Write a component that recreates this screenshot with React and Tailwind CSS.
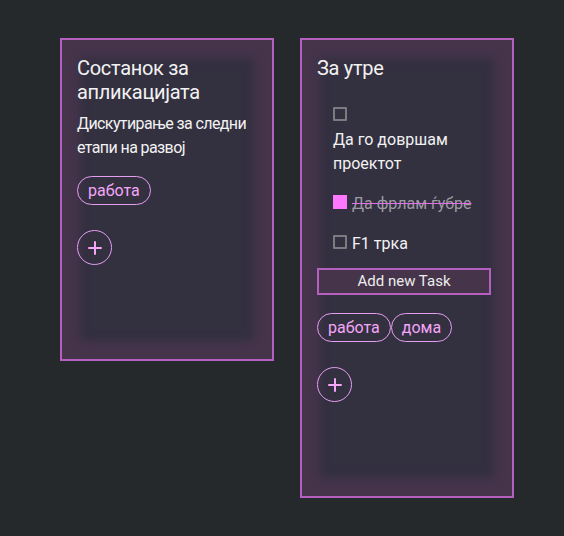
import React from 'react';

const font = { fontFamily: 'Roboto, "Noto Sans", sans-serif' };

const Tag = ({ label }) => (
    <span className="inline-flex items-center h-[29px] px-[10px] rounded-full border border-[#e59ef0] text-[16px] text-[#f4a6f8]">{label}</span>
);

const PlusButton = () => (
    <button className="w-[35px] h-[35px] rounded-full border border-[#e59ef0] flex items-center justify-center">
        <svg width="16" height="16" viewBox="0 0 16 16" fill="none" stroke="#f4a6f8" strokeWidth="2" strokeLinecap="round">
            <path d="M8 2v12M2 8h12" />
        </svg>
    </button>
);

const Checkbox = ({ checked }) => (
    <span className={checked ? "mt-[3px] w-[14px] h-[14px] shrink-0 bg-[#ff77ff]" : "mt-[3px] w-[14px] h-[14px] shrink-0 rounded-[1px] border-2 border-[#7c7c80]"} />
);

const cardClass = "w-[214px] border-2 border-[#b55fc0] bg-[#333040] shadow-[inset_0_0_10px_18px_#46344b] pl-[15px] pr-4 pt-4 pb-[94px]";

export default function App() {
    return (
        <div className="min-h-screen bg-[#25292c] flex items-start gap-[26px] pl-[60px] pt-[38px]" style={font}>
            <div className={cardClass}>
                <h2 className="text-[20px] leading-[24px] tracking-[-0.3px] text-[#f2f2f2]">Состанок за апликацијата</h2>
                <p className="mt-2 text-[16px] leading-[24px] tracking-[-0.6px] text-[#f2f2f2]">Дискутирање за следни етапи на развој</p>
                <div className="mt-4 flex">
                    <Tag label="работа" />
                </div>
                <div className="mt-[25px]">
                    <PlusButton />
                </div>
            </div>

            <div className={cardClass}>
                <h2 className="text-[20px] leading-[24px] tracking-[-0.3px] text-[#f2f2f2]">За утре</h2>
                <ul className="mt-6 ml-4 flex flex-col gap-4 text-[16px] leading-[24px]">
                    <li>
                        <div className="h-[24px] flex items-start"><Checkbox /></div>
                        <div className="text-[#f2f2f2]">Да го довршам проектот</div>
                    </li>
                    <li className="flex items-start gap-[5px]">
                        <Checkbox checked />
                        <span className="text-[#9d9aa3] line-through decoration-[#e070e8]">Да фрлам ѓубре</span>
                    </li>
                    <li className="flex items-start gap-[5px]">
                        <Checkbox />
                        <span className="text-[#f2f2f2]">F1 трка</span>
                    </li>
                </ul>
                <button className="mt-3 w-[174px] h-[27px] border-2 border-[#b55fc0] bg-[#45344a] text-[15px] text-[#ececec] flex items-center justify-center">Add new Task</button>
                <div className="mt-[18px] flex">
                    <Tag label="работа" />
                    <Tag label="дома" />
                </div>
                <div className="mt-[25px]">
                    <PlusButton />
                </div>
            </div>
        </div>
    );
}
